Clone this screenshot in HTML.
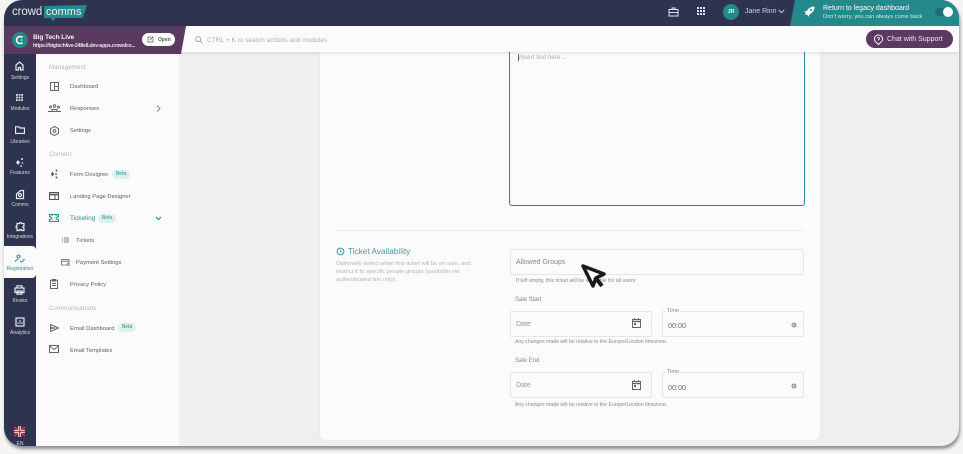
<!DOCTYPE html>
<html><head><meta charset="utf-8">
<style>
*{box-sizing:border-box;margin:0;padding:0}
html,body{width:963px;height:454px;overflow:hidden;background:#f5f5f5;font-family:"Liberation Sans",sans-serif}
.a{position:absolute;white-space:nowrap}
#app{position:absolute;left:4px;top:0;width:955px;height:446px;border-radius:18px;overflow:hidden}
#shadow{position:absolute;left:4px;top:0;width:955px;height:446px;border-radius:18px;background:#eef0f0;box-shadow:1px 3px 3px rgba(60,60,60,.55)}
.rl{position:absolute;left:0;width:32px;text-align:center;font-size:5px;color:#d5d8e2}
.ri{position:absolute;fill:none;stroke:#e8eaf0;stroke-width:1.2}
.mi{position:absolute;left:50px;color:#606060;font-size:5.8px;margin-top:1px}
.mic{position:absolute;fill:none;stroke:#666;stroke-width:1}
.sec{position:absolute;left:49px;font-size:6px;color:#b4b4b4;letter-spacing:.2px;margin-top:1px}
.beta{position:absolute;background:#e0eeee;color:#2f8f8c;font-size:5px;height:9px;line-height:9px;border-radius:5px;text-align:center;width:18px}
.fld{position:absolute;background:#fbfbfb;border:1px solid #e6e6e6;border-radius:2px}
.ph{position:absolute;font-size:7px;color:#888;margin-top:1px}
.hint{position:absolute;font-size:5.15px;color:#8b8b8b;white-space:nowrap}
</style></head><body>
<div id="shadow"></div>

<!-- main card -->
<div class="a" style="left:320px;top:52px;width:500px;height:388px;background:#fbfbfb;border-radius:0 0 6px 6px;box-shadow:0 0 2px rgba(0,0,0,.06)"></div>
<div class="a" style="left:509px;top:52px;width:296px;height:154px;border:1px solid #1f8f8c;border-top:0;border-radius:0 0 3px 3px;background:#fbfbfb"></div>
<div class="a" style="left:518px;top:54px;width:1px;height:7px;background:#666"></div>
<div class="a" style="left:519px;top:54px;font-size:6.2px;color:#aaa;font-style:italic">Insert text here ...</div>
<div class="a" style="left:336px;top:230px;width:468px;height:1px;background:#ededed"></div>

<svg class="a" style="left:336px;top:247px" width="9" height="9" viewBox="0 0 9 9" fill="none" stroke="#3f9a97"><circle cx="4.5" cy="4.5" r="3.4"/><path d="M4.5 2.5V4.7L6 5.5" stroke-width=".8"/></svg>
<div class="a" style="left:348px;top:247px;font-size:8px;color:#4a9a9a;letter-spacing:.1px">Ticket Availability</div>
<div class="a" style="left:336px;top:260px;font-size:5.8px;line-height:8px;color:#b5b5b5;white-space:normal;width:145px">Optionally select when this ticket will be on sale, and restrict it to specific people groups (available via authenticated link only)</div>

<div class="fld" style="left:510px;top:249px;width:294px;height:26px"></div>
<div class="ph" style="left:516px;top:258px">Allowed Groups</div>
<div class="hint" style="left:516px;top:278px;font-size:5.3px">If left empty, this ticket will be available for all users</div>
<div class="hint" style="left:515px;top:297px;color:#888;font-size:6px">Sale Start</div>

<div class="fld" style="left:510px;top:311px;width:142px;height:26px"></div>
<div class="ph" style="left:516px;top:320px;color:#999">Date</div>
<svg class="a" style="left:631px;top:317px" width="11" height="12" viewBox="0 0 11 12" fill="none" stroke="#666"><rect x="1.5" y="2.5" width="8" height="8" /><path d="M1.5 4.5h8" stroke-width="1.4"/><path d="M3.5 1v2M7.5 1v2"/><rect x="3" y="6" width="2" height="2" fill="#666" stroke="none"/></svg>
<div class="fld" style="left:662px;top:311px;width:142px;height:26px"></div>
<div class="a" style="left:666px;top:308px;background:#fbfbfb;padding:0 1px;font-size:5.5px;color:#888">Time</div>
<div class="ph" style="left:668px;top:320px;color:#666;font-size:7.2px">00:00</div>
<svg class="a" style="left:791px;top:322px" width="6" height="6" viewBox="0 0 6 6" fill="none" stroke="#666" stroke-width=".8"><circle cx="3" cy="3" r="2"/><path d="M3 2v1.2h1"/></svg>
<div class="hint" style="left:515px;top:339px">Any changes made will be relative to the Europe/London timezone.</div>

<div class="hint" style="left:515px;top:358px;color:#888;font-size:6px">Sale End</div>
<div class="fld" style="left:510px;top:372px;width:142px;height:26px"></div>
<div class="ph" style="left:516px;top:381px;color:#999">Date</div>
<svg class="a" style="left:631px;top:379px" width="11" height="12" viewBox="0 0 11 12" fill="none" stroke="#666"><rect x="1.5" y="2.5" width="8" height="8"/><path d="M1.5 4.5h8" stroke-width="1.4"/><path d="M3.5 1v2M7.5 1v2"/><rect x="3" y="6" width="2" height="2" fill="#666" stroke="none"/></svg>
<div class="fld" style="left:662px;top:372px;width:142px;height:26px"></div>
<div class="a" style="left:666px;top:369px;background:#fbfbfb;padding:0 1px;font-size:5.5px;color:#888">Time</div>
<div class="ph" style="left:668px;top:382px;color:#666;font-size:7.2px">00:00</div>
<svg class="a" style="left:791px;top:383px" width="6" height="6" viewBox="0 0 6 6" fill="none" stroke="#666" stroke-width=".8"><circle cx="3" cy="3" r="2"/><path d="M3 2v1.2h1"/></svg>
<div class="hint" style="left:515px;top:401.5px">Any changes made will be relative to the Europe/London timezone.</div>

<!-- cursor -->
<svg class="a" style="left:580px;top:263px" width="30" height="28" viewBox="0 0 30 28"><path d="M3 3L24 11L16 15L13 23Z" fill="#fff" stroke="#1a1a1a" stroke-width="3.5" stroke-linejoin="round"/><path d="M15 14L22 23" stroke="#1a1a1a" stroke-width="4"/></svg>

<!-- sidebar -->
<div class="a" style="left:36px;top:52px;width:143px;height:394px;background:#fbfbfb"></div>
<div class="sec" style="top:64px">Management</div>
<svg class="mic" style="left:50px;top:82px" width="9" height="9" viewBox="0 0 9 9"><rect x=".5" y=".5" width="8" height="8"/><path d="M4.5.5v8M4.5 4.5h4"/></svg>
<div class="mi" style="left:70px;top:83px">Dashboard</div>
<svg class="mic" style="left:48px;top:104px" width="13" height="8" viewBox="0 0 13 8"><circle cx="6.5" cy="2" r="1.3"/><circle cx="2.5" cy="3" r="1"/><circle cx="10.5" cy="3" r="1"/><path d="M0 7.5h13M4 7V5.5h5V7"/></svg>
<div class="mi" style="left:70px;top:105px">Responses</div>
<svg class="a" style="left:156px;top:105px" width="5" height="7" viewBox="0 0 5 7" fill="none" stroke="#888"><path d="M1 .5L4 3.5L1 6.5"/></svg>
<svg class="mic" style="left:50px;top:126px" width="9" height="10" viewBox="0 0 9 10"><path d="M4.5.5L8.5 2.7V7.3L4.5 9.5L.5 7.3V2.7Z"/><circle cx="4.5" cy="5" r="1.4"/></svg>
<div class="mi" style="left:70px;top:127px">Settings</div>

<div class="sec" style="top:151px">Content</div>
<svg class="a" style="left:49px;top:169px" width="10" height="10" viewBox="0 0 10 10" fill="#555"><path d="M3.5 2.5L5 5L3.5 7.5L2 5Z"/><circle cx="7.5" cy="1.5" r="1"/><circle cx="7" cy="5" r=".9"/><circle cx="7.5" cy="8.5" r="1"/></svg>
<div class="mi" style="left:70px;top:171px">Form Designer</div>
<div class="beta" style="left:112px;top:169.5px">Beta</div>
<svg class="a" style="left:49px;top:192px" width="10" height="8" viewBox="0 0 10 8" fill="none" stroke="#555"><rect x=".5" y=".5" width="9" height="7"/><path d="M.5 2.5h9" stroke-width="1.6"/><path d="M6 3v4"/></svg>
<div class="mi" style="left:70px;top:193px">Landing Page Designer</div>
<svg class="a" style="left:49px;top:214px" width="10" height="8" viewBox="0 0 10 8" fill="none" stroke="#2f918e"><path d="M.5.5h9v2a1.5 1.5 0 0 0 0 3v2h-9v-2a1.5 1.5 0 0 0 0-3Z"/><path d="M3 1v6M7 1v6" stroke-dasharray="1 1"/></svg>
<div class="mi" style="left:70px;top:214px;color:#2f918e;font-size:6.4px">Ticketing</div>
<div class="beta" style="left:98px;top:213.5px">Beta</div>
<svg class="a" style="left:155px;top:216px" width="7" height="5" viewBox="0 0 7 5" fill="none" stroke="#2f918e" stroke-width="1.2"><path d="M1 1L3.5 3.5L6 1"/></svg>
<svg class="a" style="left:62px;top:237px" width="7" height="6" viewBox="0 0 7 6" stroke="#666" stroke-width=".8"><path d="M2 1h5M2 3h5M2 5h5M0 1h1M0 3h1M0 5h1"/></svg>
<div class="mi" style="left:76px;top:237px">Tickets</div>
<svg class="a" style="left:61px;top:259px" width="9" height="7" viewBox="0 0 9 7" fill="none" stroke="#666" stroke-width=".8"><path d="M6 6H.5V.5h7.5V4M.5 2.2h7.5"/><circle cx="7.3" cy="5.4" r="1"/></svg>
<div class="mi" style="left:76px;top:259px">Payment Settings</div>
<svg class="mic" style="left:50px;top:279px" width="8" height="10" viewBox="0 0 8 10"><rect x=".5" y="1.2" width="7" height="8.3"/><path d="M2.5.5h3v1.500h-3ZM2 4.5h4M2 6.5h4"/></svg>
<div class="mi" style="left:70px;top:281px">Privacy Policy</div>

<div class="sec" style="top:305px">Communications</div>
<svg class="mic" style="left:50px;top:324px" width="9" height="8" viewBox="0 0 9 8"><path d="M.5.5L8.5 4L.5 7.5V4.5L5 4L.5 3.5Z"/></svg>
<div class="mi" style="left:70px;top:325px">Email Dashboard</div>
<div class="beta" style="left:118px;top:323px">Beta</div>
<svg class="mic" style="left:49px;top:345px" width="10" height="8" viewBox="0 0 10 8"><rect x=".5" y=".5" width="9" height="7"/><path d="M.5 1L5 4.5L9.5 1"/></svg>
<div class="mi" style="left:70px;top:347px">Email Templates</div>

<!-- rail and headers clipped by frame -->
<div id="app" style="pointer-events:none">
  <div class="a" style="left:0;top:0;width:955px;height:26px;background:#2e3350"></div>
  <div class="a" style="left:0;top:26px;width:955px;height:26px;background:#fbfbfb;box-shadow:0 1px 3px rgba(0,0,0,.12)"></div>
  <div class="a" style="left:0;top:26px;width:182px;height:28px;background:#5a3a5e;clip-path:polygon(0 0,100% 0,177px 100%,0 100%)"></div>
  <div class="a" style="left:786px;top:0;width:169px;height:26px;background:#23898a;clip-path:polygon(5px 0,100% 0,100% 100%,0 100%)"></div>
  <div class="a" style="left:0;top:54px;width:32px;height:392px;background:#2e3350"></div>
  <div class="a" style="left:0;top:246px;width:32px;height:32px;background:#fbfbfb;border-radius:0 4px 4px 0"></div>
</div>

<!-- logo -->
<div class="a" style="left:12px;top:5.5px;font-size:11.5px;color:#e8e8ee;letter-spacing:-.1px">crowd</div>
<div class="a" style="left:44px;top:5px;width:43px;height:13px;background:#23898a;clip-path:polygon(0 8%,100% 0,90% 100%,0 100%)"></div>
<div class="a" style="left:51px;top:18px;width:5px;height:3px;background:#23898a;clip-path:polygon(0 0,100% 0,30% 100%)"></div>
<div class="a" style="left:46px;top:6px;font-size:11px;color:#eaf6f6">comms</div>

<!-- header right -->
<svg class="a" style="left:668px;top:7px" width="11" height="10" viewBox="0 0 11 10" fill="none" stroke="#e4e6ee"><rect x="1" y="2.5" width="9" height="6.5"/><path d="M4 2.5V1h3v1.5M1 5.5h9" /></svg>
<svg class="a" style="left:697px;top:7px" width="8" height="8" viewBox="0 0 8 8" fill="#e4e6ee"><rect x="0" y="0" width="2" height="2"/><rect x="3" y="0" width="2" height="2"/><rect x="6" y="0" width="2" height="2"/><rect x="0" y="3" width="2" height="2"/><rect x="3" y="3" width="2" height="2"/><rect x="6" y="3" width="2" height="2"/><rect x="0" y="6" width="2" height="2"/><rect x="3" y="6" width="2" height="2"/><rect x="6" y="6" width="2" height="2"/></svg>
<div class="a" style="left:723px;top:3.5px;width:16px;height:16px;border-radius:50%;background:#23898a;color:#dff;font-size:5.5px;font-weight:bold;line-height:16px;text-align:center">JR</div>
<div class="a" style="left:745px;top:8px;font-size:7px;color:#cfd2de">Jane Rinn</div>
<svg class="a" style="left:778px;top:9px" width="7" height="5" viewBox="0 0 7 5" fill="none" stroke="#cfd2de" stroke-width=".9"><path d="M.8 1L3.5 3.6L6.2 1"/></svg>
<svg class="a" style="left:803px;top:6px" width="12" height="12" viewBox="0 0 12 12" fill="#fff"><path d="M11.5.5C8 .5 5.5 2 3.8 5L1 5.5 3 7 2 9 4.5 8.5 5 11 7 8C10 6.5 11.5 4 11.5.5Z"/><circle cx="8" cy="4" r="1" fill="#23898a"/></svg>
<div class="a" style="left:823px;top:4.5px;font-size:7px;color:#fff">Return to legacy dashboard</div>
<div class="a" style="left:823px;top:13.5px;font-size:5.7px;color:#d6ecec">Don't worry, you can always come back</div>
<div class="a" style="left:935px;top:8px;width:18px;height:8px;border-radius:4px;background:#1f6f75"></div>
<div class="a" style="left:943px;top:7px;width:10px;height:10px;border-radius:50%;background:#fff"></div>

<!-- second row -->
<div class="a" style="left:12px;top:32px;width:16px;height:16px;border-radius:50%;background:#23898a"></div>
<svg class="a" style="left:15px;top:35px" width="10" height="10" viewBox="0 0 10 10" fill="none" stroke="#fff" stroke-width="1.6"><path d="M7.5 2.5A3.5 3.5 0 1 0 7.5 7.5"/><circle cx="6.5" cy="5" r=".8" fill="#fff" stroke="none"/></svg>
<div class="a" style="left:33px;top:34px;font-size:6.6px;color:#f1f1f5;font-weight:bold;letter-spacing:-.1px">Big Tech Live</div>
<div class="a" style="left:33px;top:43px;font-size:5px;color:#f1e8f2;font-weight:bold;letter-spacing:-.12px">https://bigtechlive-248e8.dev-apps.crowdco...</div>
<div class="a" style="left:142px;top:33px;width:33px;height:13px;border-radius:7px;background:#fff"></div>
<svg class="a" style="left:147px;top:36px" width="7" height="7" viewBox="0 0 7 7" fill="none" stroke="#555" stroke-width=".7"><path d="M4 1H1v5h5V3M3 4l3-3M4.5 1H6v1.5"/></svg>
<div class="a" style="left:158px;top:37px;font-size:5px;color:#555;font-weight:bold">Open</div>
<svg class="a" style="left:195px;top:35.5px" width="8" height="8" viewBox="0 0 8 8" fill="none" stroke="#999" stroke-width=".8"><circle cx="3.2" cy="3.2" r="2.5"/><path d="M5 5L7.5 7.5"/></svg>
<div class="a" style="left:207px;top:36.500px;font-size:6.6px;color:#adadad">CTRL + K to search actions and modules</div>
<div class="a" style="left:866px;top:30px;width:87px;height:18px;border-radius:9px;background:#5a3a5e"></div>
<svg class="a" style="left:873px;top:33.5px" width="11" height="11" viewBox="0 0 11 11" fill="none" stroke="#fff"><path d="M5.5 1a4 4 0 0 1 2 7.5L5.5 10.5 3.5 8.5A4 4 0 0 1 5.5 1Z"/><path d="M4.5 4.5a1 1 0 1 1 1 1V6.5" stroke-width=".8"/></svg>
<div class="a" style="left:887px;top:35.5px;font-size:7px;color:#efe6f0">Chat with Support</div>

<!-- rail -->
<svg class="ri" style="left:15px;top:61px" width="9" height="10" viewBox="0 0 9 10"><path d="M1 4L4.5 1L8 4V9H5.5V6.5h-2V9H1Z"/></svg>
<div class="rl" style="left:4px;top:74.5px">Settings</div>
<svg class="a" style="left:16px;top:94px" width="7" height="7" viewBox="0 0 8 8" fill="#e8eaf0"><rect x="0" y="0" width="2" height="2"/><rect x="3" y="0" width="2" height="2"/><rect x="6" y="0" width="2" height="2"/><rect x="0" y="3" width="2" height="2"/><rect x="3" y="3" width="2" height="2"/><rect x="6" y="3" width="2" height="2"/><rect x="0" y="6" width="2" height="2"/><rect x="3" y="6" width="2" height="2"/><rect x="6" y="6" width="2" height="2"/></svg>
<div class="rl" style="left:4px;top:106px">Modules</div>
<svg class="ri" style="left:15px;top:126px" width="10" height="8" viewBox="0 0 10 8"><path d="M.5.8H4L5 2H9.5V7.5H.5Z"/></svg>
<div class="rl" style="left:4px;top:138.500px">Libraries</div>
<svg class="a" style="left:14px;top:157px" width="11" height="11" viewBox="0 0 11 11" fill="#e8eaf0"><path d="M4 3L6 5.5 4 8 2 5.5Z"/><circle cx="8" cy="2" r="1"/><circle cx="8.5" cy="6" r=".8"/><circle cx="7" cy="9" r=".9"/></svg>
<div class="rl" style="left:4px;top:170px">Features</div>
<svg class="ri" style="left:15px;top:189px" width="10" height="11" viewBox="0 0 10 11"><path d="M1.5 9.5V5L5.5 1.5H8.5V9.5ZM1.5 9.5H8.5"/><circle cx="5" cy="6" r="1.5"/></svg>
<div class="rl" style="left:4px;top:202px">Comms</div>
<svg class="ri" style="left:15px;top:221px" width="11" height="11" viewBox="0 0 11 11"><path d="M2 2.5H4.5A1 1 0 0 1 6.5 2.5H9V5A1 1 0 0 0 9 7V9.5H6.5A1 1 0 0 0 4.5 9.5H2V7A1 1 0 0 1 2 5Z"/></svg>
<div class="rl" style="left:4px;top:234px">Integrations</div>
<svg class="a" style="left:15px;top:254px" width="10" height="9" viewBox="0 0 10 9" fill="none" stroke="#2f918e" stroke-width="1"><circle cx="3.5" cy="2.5" r="1.5"/><path d="M.5 8C.5 6 2 5.5 3.5 5.5M5 7L6.5 8.2 9.5 5"/></svg>
<div class="rl" style="left:4px;top:266px;color:#2f918e">Registration</div>
<svg class="ri" style="left:14px;top:285px" width="11" height="10" viewBox="0 0 11 10"><rect x="1" y="3" width="9" height="4.5"/><path d="M3 3V.8h5V3M3 6H8V9.2H3Z"/></svg>
<div class="rl" style="left:4px;top:298px">Kiosks</div>
<svg class="ri" style="left:15px;top:317px" width="10" height="10" viewBox="0 0 10 10"><rect x="1" y="1" width="8" height="8"/><path d="M3 7V5.5M5 7V3M7 7V5" stroke-width=".9"/></svg>
<div class="rl" style="left:4px;top:330px">Analytics</div>
<svg class="a" style="left:14px;top:426px" width="11" height="11" viewBox="0 0 11 11"><path d="M0 1L11 10M11 1L0 10" stroke="#c9374b" stroke-width="2"/><path d="M5.5 0V11M0 5.5H11" stroke="#fff" stroke-width="3"/><path d="M5.5 0V11M0 5.5H11" stroke="#c9374b" stroke-width="1.6"/></svg>
<div class="rl" style="left:4px;top:441px">EN</div>
</body></html>
